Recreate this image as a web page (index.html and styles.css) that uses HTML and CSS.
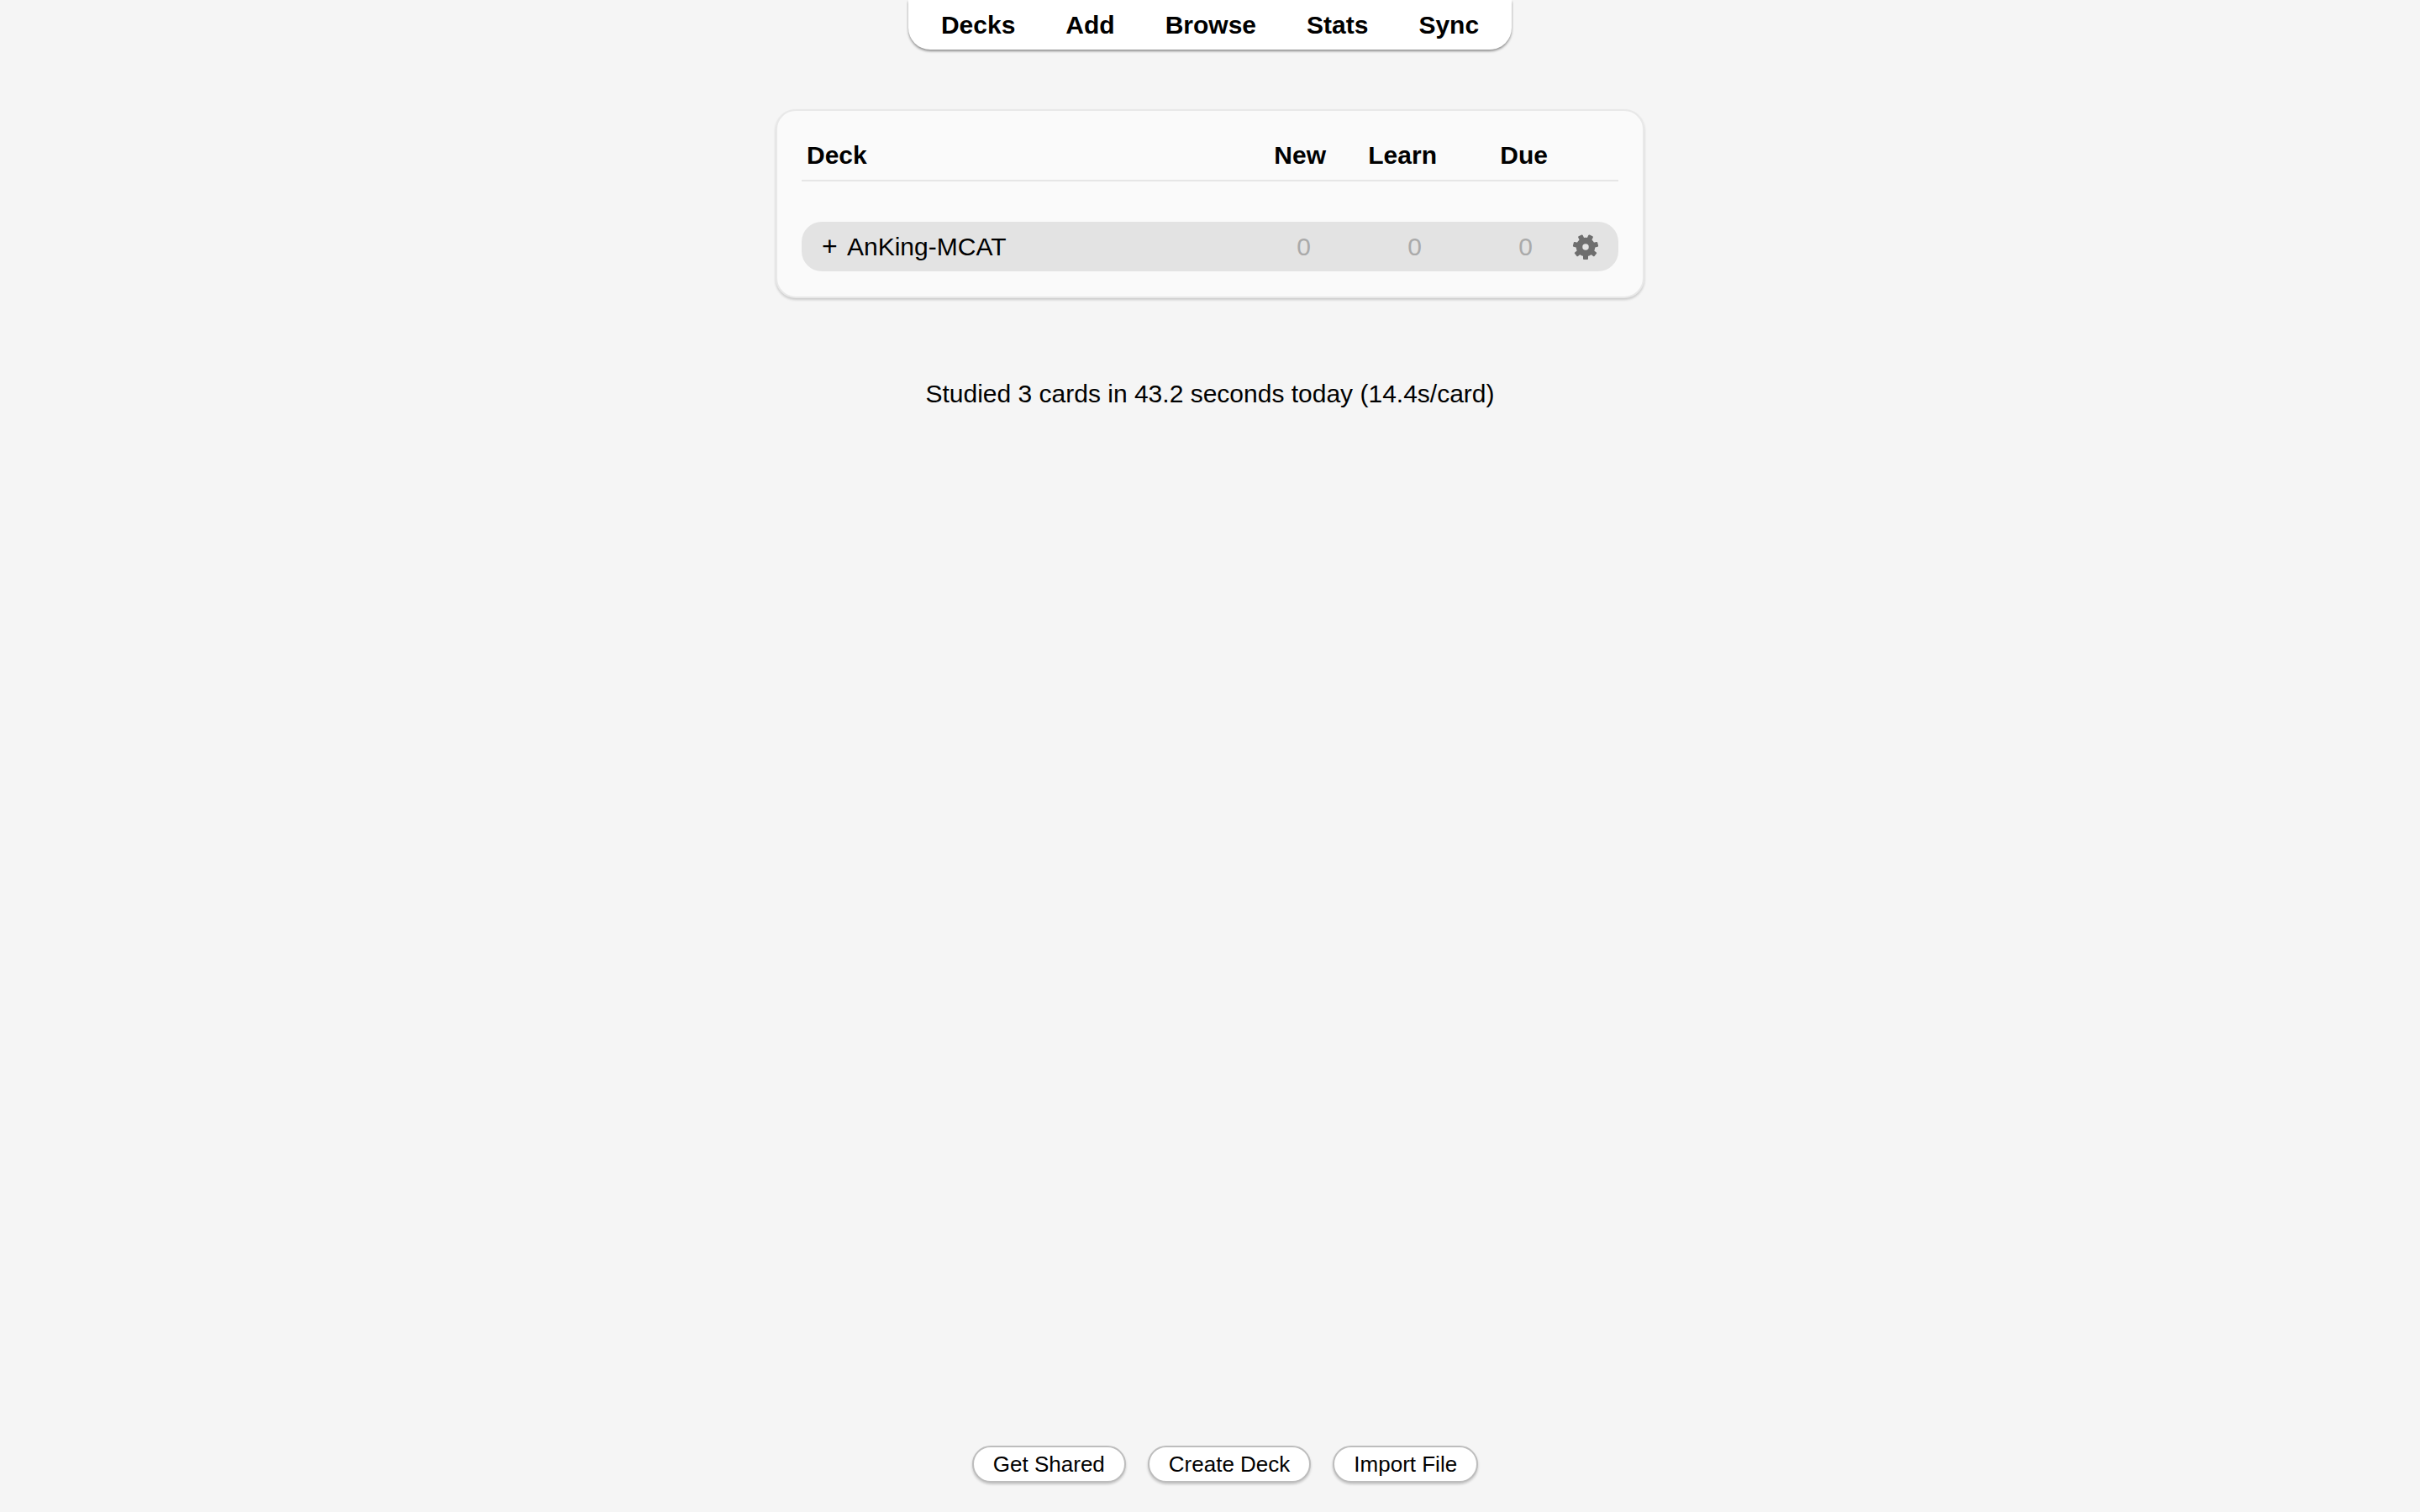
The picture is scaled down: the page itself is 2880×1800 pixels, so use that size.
FILE: index.html
```html
<!DOCTYPE html>
<html lang="en">
<head>
    <meta charset="UTF-8">
    <title>Anki</title>
    <link rel="stylesheet" href="styles.css">
</head>
<body>
    <nav class="toolbar">
        <a class="tool-link">Decks</a>
        <a class="tool-link">Add</a>
        <a class="tool-link">Browse</a>
        <a class="tool-link">Stats</a>
        <a class="tool-link">Sync</a>
    </nav>

    <main class="deck-card">
        <div class="deck-head">
            <span class="col-name">Deck</span>
            <span class="col-num">New</span>
            <span class="col-num">Learn</span>
            <span class="col-num">Due</span>
        </div>
        <div class="deck-row">
            <span class="deck-name"><span class="collapse">+</span>AnKing-MCAT</span>
            <span class="count">0</span>
            <span class="count">0</span>
            <span class="count">0</span>
            <svg class="gear" viewBox="0 0 32 32" aria-hidden="true">
                <g class="gear-teeth">
                    <rect x="13" y="1" width="6" height="8" rx="1" transform="rotate(25.7 16 16)"/>
                    <rect x="13" y="1" width="6" height="8" rx="1" transform="rotate(77.1 16 16)"/>
                    <rect x="13" y="1" width="6" height="8" rx="1" transform="rotate(128.6 16 16)"/>
                    <rect x="13" y="1" width="6" height="8" rx="1" transform="rotate(180 16 16)"/>
                    <rect x="13" y="1" width="6" height="8" rx="1" transform="rotate(231.4 16 16)"/>
                    <rect x="13" y="1" width="6" height="8" rx="1" transform="rotate(282.9 16 16)"/>
                    <rect x="13" y="1" width="6" height="8" rx="1" transform="rotate(334.3 16 16)"/>
                </g>
                <circle class="gear-ring" cx="16" cy="16" r="7.5"/>
            </svg>
        </div>
    </main>

    <p class="studied">Studied 3 cards in 43.2 seconds today (14.4s/card)</p>

    <footer class="bottom-bar">
        <button class="pill">Get Shared</button>
        <button class="pill">Create Deck</button>
        <button class="pill">Import File</button>
    </footer>
</body>
</html>
```

FILE: styles.css
```css
body {
    margin: 0;
    height: 100vh;
    display: flex;
    flex-direction: column;
    align-items: center;
    background-color: #f5f5f5;
    color: #000;
    font-family: "Liberation Sans", Arial, sans-serif;
    font-size: 30px;
}

.toolbar {
    display: flex;
    align-items: center;
    gap: 60px;
    height: 59px;
    padding: 0 39px;
    background: #fff;
    border-radius: 0 0 26px 26px;
    box-shadow: 0 2px 3px rgba(0,0,0,0.42);
}

.tool-link {
    font-weight: bold;
}

.deck-card {
    box-sizing: border-box;
    width: 1034px;
    height: 225px;
    margin-top: 71px;
    padding: 30px 29px 0;
    background: #fafafa;
    border: 2px solid #e8e8e8;
    border-radius: 24px;
    box-shadow: 0 2px 3px rgba(0,0,0,0.18);
}

.deck-head,
.deck-row {
    display: grid;
    grid-template-columns: 1fr 132px 132px 132px 85px;
    align-items: center;
}

.deck-head {
    box-sizing: border-box;
    height: 54px;
    padding-bottom: 6px;
    border-bottom: 2px solid #e6e6e6;
    font-weight: bold;
}

.col-name {
    padding-left: 6px;
}

.col-num {
    margin-right: -1px;
    text-align: right;
}

.deck-row {
    height: 59px;
    margin-top: 48px;
    background: #e3e3e3;
    border-radius: 24px;
}

.deck-name {
    padding-left: 24px;
}

.collapse {
    display: inline-block;
    width: 30px;
    font-size: 32px;
}

.count {
    padding-right: 17px;
    text-align: right;
    color: #aaa;
}

.gear {
    width: 32px;
    height: 32px;
    margin-left: 30px;
}

.gear-teeth {
    fill: #6e6e6e;
}

.gear-ring {
    fill: none;
    stroke: #6e6e6e;
    stroke-width: 7.5;
}

.studied {
    margin: 97px 0 0;
}

.bottom-bar {
    display: flex;
    gap: 26px;
    margin-top: auto;
    margin-bottom: 35px;
    margin-left: 36px;
}

.pill {
    height: 44px;
    padding: 0 23px;
    background: #fff;
    border: 2px solid #bdbdbd;
    border-radius: 22px;
    box-shadow: 0 2px 3px rgba(0,0,0,0.2);
    color: #000;
    font-family: inherit;
    font-size: 26px;
}
```
